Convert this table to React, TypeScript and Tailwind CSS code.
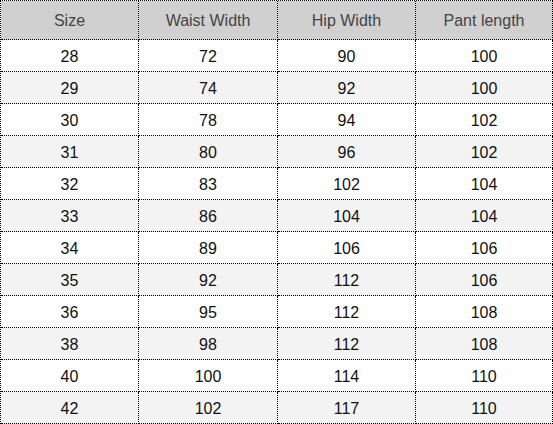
const headers = ["Size", "Waist Width", "Hip Width", "Pant length"]

const rows = [
  ["28", "72", "90", "100"],
  ["29", "74", "92", "100"],
  ["30", "78", "94", "102"],
  ["31", "80", "96", "102"],
  ["32", "83", "102", "104"],
  ["33", "86", "104", "104"],
  ["34", "89", "106", "106"],
  ["35", "92", "112", "106"],
  ["36", "95", "112", "108"],
  ["38", "98", "112", "108"],
  ["40", "100", "114", "110"],
  ["42", "102", "117", "110"],
]

export default function App() {
  return (
    <div className="w-[553px] h-[424px] bg-white font-['Liberation_Sans',Arial,sans-serif]">
      <div className="grid grid-cols-[138px_139px_138px_137px] border-l border-t border-dotted border-black">
        {headers.map((h) => (
          <div
            key={h}
            className="h-[39px] flex items-center justify-center pt-[1px] bg-[#d0d0d0] text-[#444444] text-[16px] border-r border-b border-dotted border-black"
          >
            {h}
          </div>
        ))}
        {rows.map((row, i) =>
          row.map((cell, j) => (
            <div
              key={`${i}-${j}`}
              className={`h-[32px] flex items-center justify-center pt-[3px] text-[16px] text-[#111111] border-r border-b border-dotted border-black ${
                i % 2 === 0 ? "bg-white" : "bg-[#f3f3f3]"
              }`}
            >
              {cell}
            </div>
          ))
        )}
      </div>
    </div>
  )
}
